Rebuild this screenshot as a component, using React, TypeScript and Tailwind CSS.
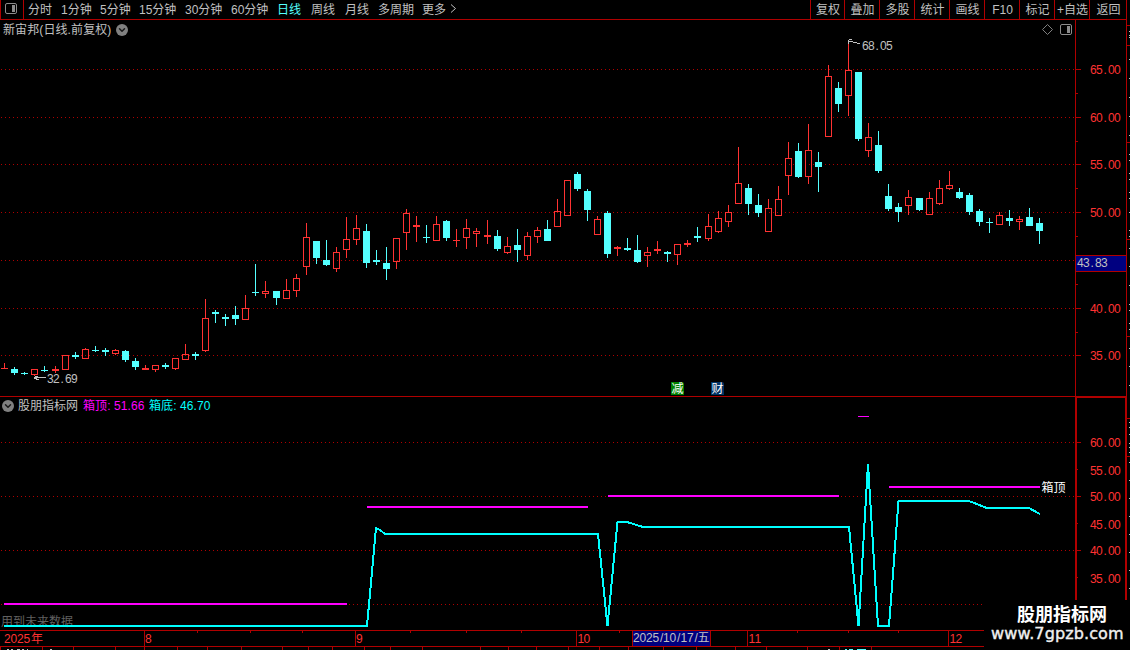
import { ChevronDown } from 'lucide-react';

const UP = '#ff3232';
const DOWN = '#54ffff';
const LINE = '#b00000';
const FONT = '"Liberation Sans", "Noto Sans CJK SC", sans-serif';

const periods = [
  { label: '分时', width: 'w-[33px]' },
  { label: '1分钟', width: 'w-[39px]' },
  { label: '5分钟', width: 'w-[39px]' },
  { label: '15分钟', width: 'w-[46px]' },
  { label: '30分钟', width: 'w-[46px]' },
  { label: '60分钟', width: 'w-[46px]' },
  { label: '日线', width: 'w-[34px]', active: true },
  { label: '周线', width: 'w-[34px]' },
  { label: '月线', width: 'w-[33px]' },
  { label: '多周期', width: 'w-[44px]' },
  { label: '更多', width: 'w-[28px]' },
];

const tools = [
  { label: '复权', width: 'w-[34px]' },
  { label: '叠加', width: 'w-[35px]' },
  { label: '多股', width: 'w-[35px]' },
  { label: '统计', width: 'w-[35px]' },
  { label: '画线', width: 'w-[35px]' },
  { label: 'F10', width: 'w-[35px]' },
  { label: '标记', width: 'w-[35px]' },
  { label: '+自选', width: 'w-[35px]' },
  { label: '返回', width: 'w-[37px]' },
];

// center x, wick top, body top, body bottom, wick bottom, rising
type Candle = [number, number, number, number, number, 0 | 1];

const candles: Candle[] = [
  [4, 363, 368, 369, 369, 1], [14, 367, 369, 373, 375, 0], [24, 372, 373, 374, 375, 0],
  [34, 369, 369, 375, 376, 1], [44, 366, 370, 371, 372, 0], [55, 366, 369, 371, 373, 1],
  [65, 355, 355, 370, 370, 1], [75, 352, 355, 357, 359, 0], [85, 348, 349, 359, 359, 1],
  [95, 346, 350, 351, 352, 0], [105, 348, 350, 352, 356, 0], [115, 349, 350, 354, 355, 1],
  [125, 350, 351, 360, 362, 0], [135, 358, 361, 367, 370, 0], [145, 365, 368, 370, 370, 1],
  [155, 365, 365, 370, 372, 1], [165, 363, 365, 367, 369, 0], [175, 358, 358, 369, 370, 1],
  [185, 344, 354, 360, 360, 1], [195, 352, 354, 356, 360, 0], [205, 299, 318, 351, 352, 1],
  [215, 310, 312, 314, 323, 0], [225, 314, 317, 319, 326, 0], [235, 306, 315, 319, 325, 0],
  [245, 295, 308, 320, 320, 1], [255, 264, 292, 293, 296, 0], [265, 281, 291, 294, 298, 1],
  [276, 291, 291, 298, 305, 0], [286, 279, 290, 299, 299, 1], [296, 274, 278, 291, 297, 1],
  [306, 223, 237, 267, 275, 1], [316, 241, 241, 258, 264, 0], [326, 240, 260, 265, 266, 0],
  [336, 247, 252, 269, 272, 1], [346, 217, 239, 250, 258, 1], [356, 215, 228, 240, 245, 1],
  [366, 224, 231, 263, 268, 0], [376, 250, 260, 262, 265, 0], [386, 247, 263, 269, 280, 0],
  [396, 238, 238, 262, 269, 1], [406, 209, 213, 233, 250, 1], [416, 216, 225, 227, 242, 1],
  [426, 225, 237, 238, 243, 0], [436, 216, 224, 241, 241, 1], [446, 220, 221, 238, 241, 0],
  [456, 229, 240, 241, 247, 1], [466, 219, 228, 238, 249, 1], [476, 228, 231, 234, 247, 1],
  [487, 220, 235, 237, 244, 1], [497, 230, 236, 249, 251, 0], [507, 237, 246, 253, 254, 1],
  [517, 229, 245, 250, 262, 0], [527, 232, 236, 256, 260, 1], [537, 227, 230, 237, 243, 1],
  [547, 220, 229, 241, 241, 0], [557, 199, 211, 227, 227, 1], [567, 180, 180, 216, 216, 1],
  [577, 172, 174, 189, 191, 0], [587, 189, 191, 210, 221, 0], [597, 216, 219, 235, 235, 1],
  [607, 211, 213, 254, 258, 0], [617, 246, 247, 249, 256, 1], [627, 238, 248, 250, 251, 0],
  [637, 235, 250, 262, 263, 0], [647, 247, 252, 256, 267, 1], [657, 241, 249, 251, 254, 1],
  [667, 251, 252, 254, 262, 0], [677, 244, 244, 255, 265, 1], [687, 240, 243, 245, 247, 1],
  [697, 227, 236, 238, 242, 0], [708, 214, 226, 239, 241, 1], [718, 211, 218, 232, 233, 1],
  [728, 205, 212, 222, 227, 1], [738, 147, 183, 204, 204, 1], [748, 184, 188, 204, 215, 0],
  [758, 194, 205, 213, 217, 0], [768, 199, 208, 232, 232, 1], [778, 186, 199, 216, 216, 1],
  [788, 142, 158, 176, 195, 1], [798, 143, 151, 177, 178, 0], [808, 124, 150, 177, 184, 1],
  [818, 152, 162, 167, 192, 0], [828, 65, 76, 137, 137, 1], [838, 82, 88, 104, 112, 0],
  [848, 43, 70, 96, 116, 1], [858, 72, 72, 139, 141, 0], [868, 123, 137, 151, 157, 1],
  [878, 131, 145, 171, 173, 0], [888, 184, 196, 209, 211, 0], [898, 203, 207, 212, 222, 0],
  [908, 190, 197, 206, 215, 1], [919, 198, 198, 210, 211, 0], [929, 192, 198, 215, 215, 1],
  [939, 180, 188, 204, 205, 1], [949, 171, 185, 189, 190, 1], [959, 188, 192, 198, 199, 0],
  [969, 193, 195, 212, 215, 0], [979, 209, 211, 222, 226, 0], [989, 218, 222, 223, 233, 0],
  [999, 212, 215, 225, 225, 1], [1009, 210, 218, 221, 226, 0], [1019, 216, 219, 222, 230, 1],
  [1029, 208, 217, 226, 226, 0], [1039, 218, 223, 231, 244, 0],
];

const mainGrid = [69, 117, 164, 212, 260, 308, 355];
const mainMinor = [93, 141, 188, 236, 284, 332];
const mainLabels: [number, string][] = [
  [69, '65.00'], [117, '60.00'], [164, '55.00'], [212, '50.00'], [308, '40.00'], [355, '35.00'],
];

const subGrid = [442, 496, 550, 604];
const subMinor = [469, 523, 577];
const subLabels: [number, string][] = [
  [442, '60.00'], [470, '55.00'], [496, '50.00'], [524, '45.00'], [550, '40.00'], [578, '35.00'],
];

const boxTop = [
  [4, 347, 603, 2], [367, 588, 506, 2], [608, 839, 495, 2], [858, 869, 416, 1], [889, 1040, 486, 2],
];
const boxBottom =
  '4,626 367,626 376,528 380,530 385,534 598,534 607.5,626 617.5,522 627,522 643,527 849,527 858.5,626 868,464 878,626 889,626 898.5,501 969,501 987,508 1029,508 1040,514';

const monthLines = [144, 355, 576, 747, 948];
const weekTicks = [197, 250, 302, 410, 466, 521, 619, 797, 848, 898];
const stripTicks = [
  0, 42, 73, 115, 144, 177, 207, 241, 282, 308, 332, 364, 390, 422, 480, 508, 536, 568, 599, 628,
  663, 696, 735, 766, 807, 839, 871,
];

const gutterRed = [25, 45, 142, 239, 336, 418, 456];
const gutterWhite = [
  31, 35, 37, 59, 78, 97, 116, 135, 154, 160, 173, 179, 192, 198, 212, 230, 236, 248, 266, 285, 304,
  310, 323, 329, 348, 366, 385, 422, 427, 434, 443, 447, 452, 462, 480, 498, 516, 534, 552, 570, 588,
];

// every character sits in a 6px cell
function Digits({ x, y, text, fill }: { x: number; y: number; text: string; fill: string }) {
  const cells = text.split('').map((ch, i) => x + i * 6 + (ch === '.' ? 1.5 : 0));
  return (
    <text x={cells.join(' ')} y={y} fill={fill} fontSize="12" fontFamily={FONT}>
      {text}
    </text>
  );
}

function GridLine({ y }: { y: number }) {
  return <line x1="1" x2="1075" y1={y + 0.5} y2={y + 0.5} stroke={LINE} strokeDasharray="1 3" />;
}

function Bar({ candle }: { candle: Candle }) {
  const [x, high, top, bottom, low, rising] = candle;
  if (rising && bottom - top > 2) {
    return (
      <g>
        <rect x={x} y={high} width="1" height={top - high} fill={UP} />
        <rect x={x} y={bottom} width="1" height={low - bottom} fill={UP} />
        <rect x={x - 2.5} y={top + 0.5} width="6" height={bottom - top - 1} fill="none" stroke={UP} />
      </g>
    );
  }
  const color = rising ? UP : DOWN;
  return (
    <g fill={color}>
      <rect x={x} y={high} width="1" height={low - high} />
      <rect x={x - 3} y={top} width="7" height={bottom - top} />
    </g>
  );
}

function PanelIcon() {
  return (
    <svg width="12" height="11" viewBox="0 0 12 11">
      <rect x="0.5" y="0.5" width="11" height="10" rx="1.5" fill="none" stroke="#8c8c8c" />
      <rect x="7" y="2" width="3" height="7" fill="#8c8c8c" />
    </svg>
  );
}

function Dropdown() {
  return (
    <span className="-mt-[2px] flex h-3 w-3 shrink-0 items-center justify-center rounded-full bg-[#808080]">
      <ChevronDown size={10} strokeWidth={3.5} className="text-[#181818]" />
    </span>
  );
}

function Toolbar() {
  return (
    <header className="flex h-5 shrink-0 border-b border-[#b00000] text-[#c0c0c0]">
      <div className="flex w-6 shrink-0 items-start border-x border-[#b00000] pt-[3px] pl-1">
        <PanelIcon />
      </div>
      <nav className="flex flex-1 pl-1">
        {periods.map((p) => (
          <button
            key={p.label}
            className={`${p.width} shrink-0 text-left leading-[18px] ${p.active ? 'text-[#54ffff]' : ''}`}
          >
            {p.label}
          </button>
        ))}
        <svg width="7" height="10" viewBox="0 0 7 10" className="mt-1">
          <path d="M1 0.5 L5.5 4.5 L1 8.5" fill="none" stroke="#c0c0c0" />
        </svg>
      </nav>
      {tools.map((t) => (
        <button
          key={t.label}
          className={`${t.width} shrink-0 border-l border-[#b00000] pl-px text-center leading-[18px] whitespace-nowrap`}
        >
          {t.label}
        </button>
      ))}
    </header>
  );
}

function MainChart() {
  return (
    <section className="relative h-[376px] shrink-0">
      <svg width="1127" height="376" viewBox="0 20 1127 376" className="block" shapeRendering="crispEdges">
        {mainGrid.map((y) => <GridLine key={y} y={y} />)}
        {candles.map((c) => <Bar key={c[0]} candle={c} />)}

        <path d="M34 377.5 H46 M34.5 377 V379 M35 376.5 H38 M35 378.5 H37 M36 379.5 H39" stroke="#c0c0c0" fill="none" />
        <Digits x={47} y={383} text="32.69" fill="#c0c0c0" />
        <path d="M848 41.5 H853 M848.5 40 V44 M849 39.5 H852 M853 42.5 H857 M857 43.5 H860" stroke="#c0c0c0" fill="none" />
        <Digits x={862} y={50} text="68.05" fill="#c0c0c0" />

        <path d="M1047.5 24.5 L1052.5 29.5 L1047.5 34.5 L1042.5 29.5 Z" fill="none" stroke="#808080" shapeRendering="auto" />
        <g shapeRendering="auto">
          <rect x="1060.5" y="24.5" width="11" height="10" rx="1.5" fill="none" stroke="#8c8c8c" />
          <rect x="1067" y="26" width="3" height="7" fill="#8c8c8c" />
        </g>

        <g fill={LINE}>
          <rect x="1075" y="20" width="1" height="376" />
          {mainGrid.map((y) => <rect key={y} x="1076" y={y} width="5" height="1" />)}
          {mainMinor.map((y) => <rect key={y} x="1076" y={y} width="2" height="1" />)}
          <rect x="1126" y="20" width="1" height="376" />
        </g>
        {mainLabels.map(([y, label]) => <Digits key={label} x={1090} y={y + 5} text={label} fill={UP} />)}

        <rect x="1076" y="255" width="50" height="17" fill="#000080" />
        <rect x="1075" y="255" width="51" height="1" fill={LINE} />
        <rect x="1075" y="271" width="51" height="1" fill={LINE} />
        <Digits x={1077} y={267} text="43.83" fill="#c0c0c0" />
      </svg>
      <div className="absolute top-[4px] left-[3px] flex items-center gap-[5px] leading-[13px] tracking-[0.1px] text-[#c0c0c0]">
        新宙邦(日线.前复权)
        <Dropdown />
      </div>
      <span className="absolute top-[362px] left-[671px] h-[13px] w-[13px] rounded-tr-[2px] bg-[#008000] text-center leading-[14px] text-white">
        减
      </span>
      <span className="absolute top-[362px] left-[711px] h-[13px] w-[13px] rounded-tr-[2px] bg-[#003366] text-center leading-[14px] text-white">
        财
      </span>
    </section>
  );
}

function BoxIndicator() {
  return (
    <section className="relative h-[234px] shrink-0">
      <svg width="1127" height="234" viewBox="0 396 1127 234" className="block" shapeRendering="crispEdges">
        <rect x="0" y="396" width="1127" height="1" fill={LINE} />
        {subGrid.map((y) => <GridLine key={y} y={y} />)}
        <text x="1" y="626" fill="#606060" fontSize="12" fontFamily={FONT}>用到未来数据</text>
        {boxTop.map(([x1, x2, y, h]) => (
          <rect key={x1} x={x1} y={y} width={x2 - x1} height={h} fill="#ff00ff" />
        ))}
        <polyline points={boxBottom} fill="none" stroke="#00ffff" strokeWidth="2" />
        <text x="1041.5" y="492" fill="#ffffff" fontSize="12" fontFamily={FONT}>箱顶</text>

        <g fill={LINE}>
          <rect x="1075" y="396" width="52" height="2" />
          <rect x="1075" y="397" width="2" height="233" />
          <rect x="1125" y="397" width="2" height="233" />
          {subGrid.map((y) => <rect key={y} x="1077" y={y} width="4" height="1" />)}
          {subMinor.map((y) => <rect key={y} x="1077" y={y} width="1" height="1" />)}
        </g>
        {subLabels.map(([y, label]) => <Digits key={label} x={1090} y={y + 5} text={label} fill={UP} />)}
      </svg>
      <div className="absolute top-[4px] left-[2px] flex items-center leading-[13px] whitespace-nowrap">
        <Dropdown />
        <span className="ml-[4px] w-[65px] text-[#c0c0c0]">股朋指标网</span>
        <span className="w-[66px] tracking-[0.1px] text-[#ff00ff]">箱顶: 51.66</span>
        <span className="tracking-[0.1px] text-[#00ffff]">箱底: 46.70</span>
      </div>
    </section>
  );
}

function TimeAxis() {
  return (
    <footer className="h-5 shrink-0">
      <svg width="1127" height="20" viewBox="0 630 1127 20" className="block" shapeRendering="crispEdges">
        <g fill={LINE}>
          <rect x="0" y="630" width="1127" height="1" />
          <rect x="0" y="646" width="1127" height="1" />
          {monthLines.map((x) => <rect key={x} x={x} y="630" width="1" height="16" />)}
          {weekTicks.map((x) => <rect key={x} x={x} y="631" width="1" height="2" />)}
          {stripTicks.map((x) => <rect key={x} x={x} y="647" width="1" height="3" />)}
        </g>
        <rect x="632" y="631" width="79" height="15" fill="#000080" />
        <rect x="632" y="631" width="1" height="15" fill={LINE} />
        <rect x="710" y="631" width="1" height="15" fill={LINE} />
        <text x="4 10.5 17 23.5 31" y="643" fill={UP} fontSize="12" fontFamily={FONT}>2025年</text>
        <Digits x={145} y={643} text="8" fill={UP} />
        <Digits x={356} y={643} text="9" fill={UP} />
        <Digits x={577.5} y={643} text="10" fill={UP} />
        <Digits x={748.5} y={643} text="11" fill={UP} />
        <Digits x={949.5} y={643} text="12" fill={UP} />
        <text x="633 639.5 646 652.5 660 663 669.5 677 680.5 687 694.5 697.5" y="642" fill="#c0c0c0" fontSize="12" fontFamily={FONT}>
          2025/10/17/五
        </text>
        {/* tops of the row that is cut off below the axis */}
        <path d="M7 649.5 H9 M11 649.5 H13 M17 649.5 H20 M22 649.5 H24 M27 649.5 H28 M50 649.5 H52 M828 649.5 H830" stroke="#c0c0c0" />
        <path d="M845 649.5 H847 M849 649.5 H853 M857 649.5 H866" stroke="#54ffff" />
      </svg>
    </footer>
  );
}

function Gutter() {
  return (
    <svg width="3" height="650" viewBox="1127 0 3 650" className="block shrink-0" shapeRendering="crispEdges">
      {gutterRed.map((y) => <rect key={y} x="1127" y={y} width="3" height="1" fill={LINE} />)}
      {gutterWhite.map((y) => <rect key={y} x="1129" y={y} width="1" height="1" fill="#c0c0c0" />)}
    </svg>
  );
}

export default function App() {
  return (
    <div className="relative flex h-[650px] w-[1130px] overflow-hidden bg-black font-['Liberation_Sans','Noto_Sans_CJK_SC',sans-serif] text-[12px]">
      <main className="flex w-[1127px] shrink-0 flex-col">
        <div className="border-r border-[#b00000]">
          <Toolbar />
        </div>
        <MainChart />
        <BoxIndicator />
        <TimeAxis />
      </main>
      <Gutter />
      <div className="absolute top-[600px] left-[984px] h-[50px] w-[146px] bg-black pt-[4px] text-white">
        <div className="pl-[33px] text-[18px] leading-[22px] font-bold">股朋指标网</div>
        <div className="pl-[7px] font-['DejaVu_Sans'] text-[16px] leading-[16px] tracking-[0.12px] text-[#f0f0f0] [-webkit-text-stroke:0.4px_#f0f0f0]">
          www.7gpzb.com
        </div>
      </div>
    </div>
  );
}
